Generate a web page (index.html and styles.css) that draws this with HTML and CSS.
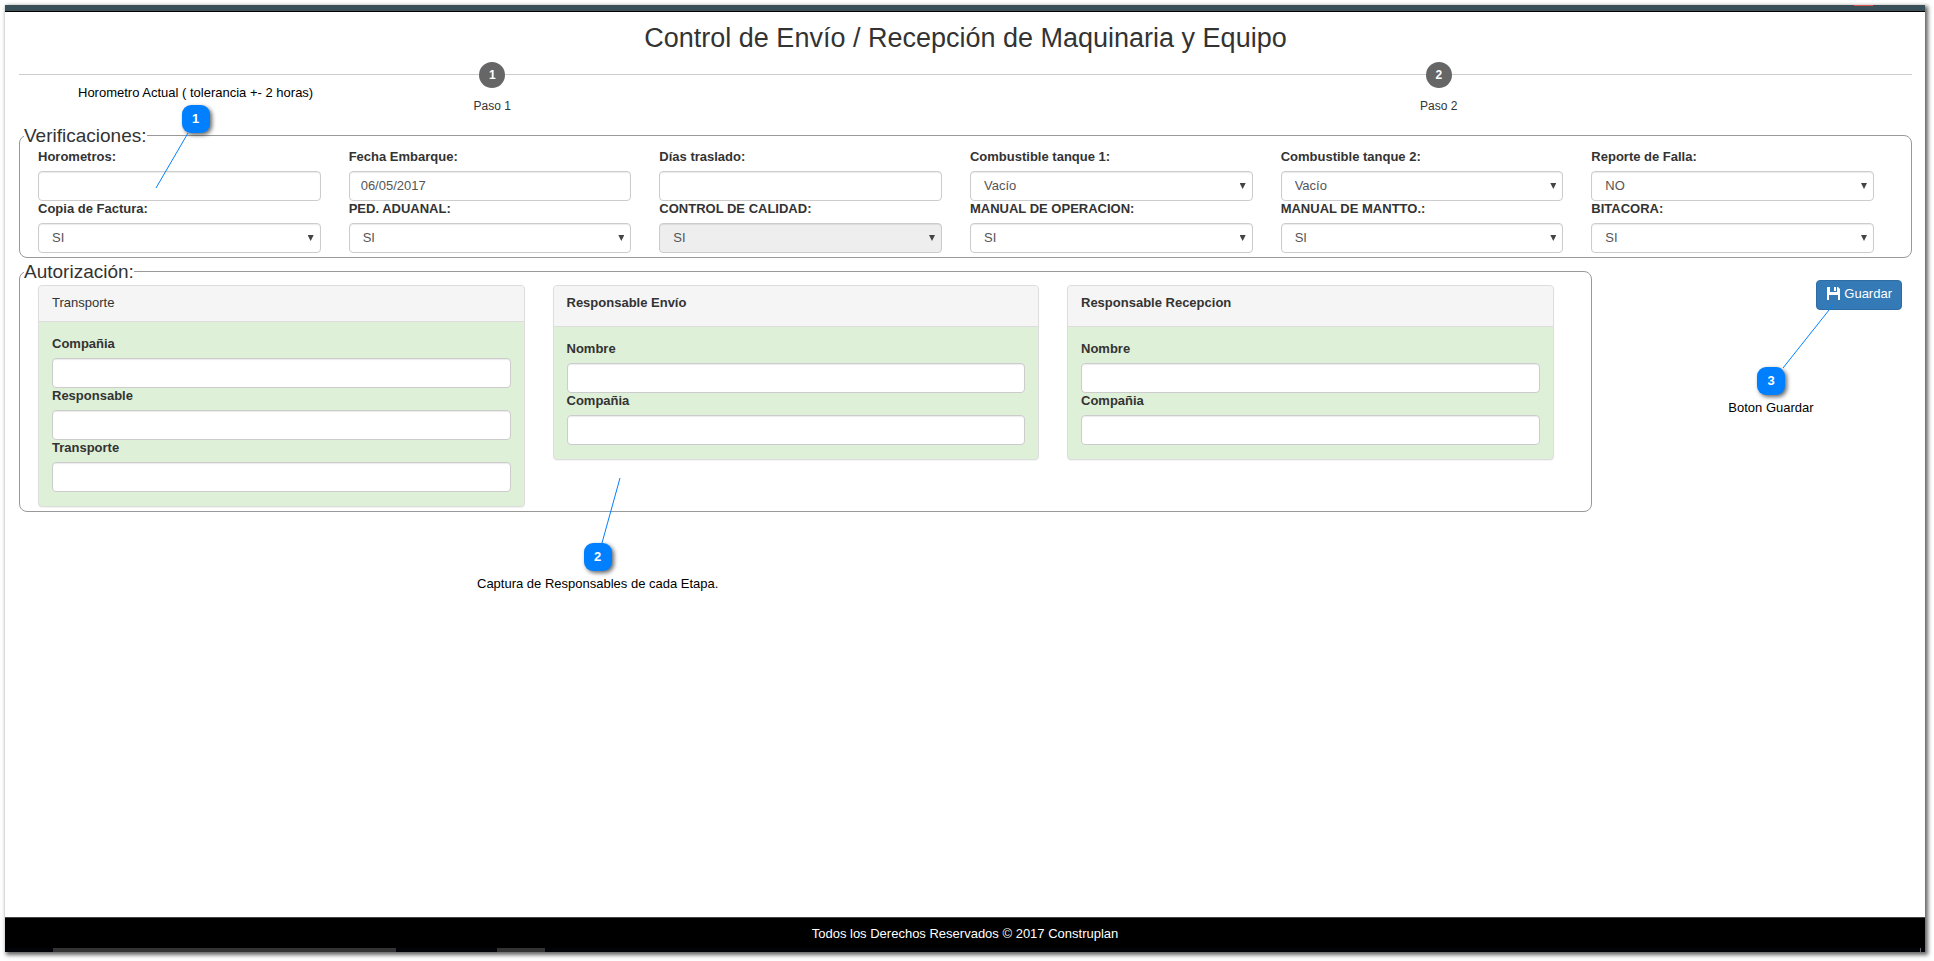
FILE: index.html
```html
<!DOCTYPE html>
<html lang="es">
<head>
<meta charset="utf-8">
<title>Control de Envío / Recepción de Maquinaria y Equipo</title>
<link rel="stylesheet" href="styles.css">
</head>
<body>
<div class="page">
  <header class="topbar"><span class="topbar-mark"></span></header>
  <main class="content">
    <h1 class="title">Control de Envío / Recepción de Maquinaria y Equipo</h1>
    <ol class="steps">
      <li class="step"><span class="step-dot">1</span><span class="step-name">Paso 1</span></li>
      <li class="step"><span class="step-dot">2</span><span class="step-name">Paso 2</span></li>
    </ol>

    <fieldset class="group">
      <legend class="group-title">Verificaciones:</legend>
      <div class="checks">
        <div class="field"><label class="label" for="horometros">Horometros:</label><input class="control" id="horometros" type="text"></div>
        <div class="field"><label class="label" for="fecha">Fecha Embarque:</label><input class="control" id="fecha" type="text" value="06/05/2017"></div>
        <div class="field"><label class="label" for="dias">Días traslado:</label><input class="control" id="dias" type="text"></div>
        <div class="field"><label class="label" for="tanque1">Combustible tanque 1:</label><div class="picker"><select class="control select" id="tanque1"><option>Vacío</option></select></div></div>
        <div class="field"><label class="label" for="tanque2">Combustible tanque 2:</label><div class="picker"><select class="control select" id="tanque2"><option>Vacío</option></select></div></div>
        <div class="field"><label class="label" for="falla">Reporte de Falla:</label><div class="picker"><select class="control select" id="falla"><option>NO</option><option>SI</option></select></div></div>
        <div class="field"><label class="label" for="factura">Copia de Factura:</label><div class="picker"><select class="control select" id="factura"><option>SI</option><option>NO</option></select></div></div>
        <div class="field"><label class="label" for="aduanal">PED. ADUANAL:</label><div class="picker"><select class="control select" id="aduanal"><option>SI</option><option>NO</option></select></div></div>
        <div class="field"><label class="label" for="calidad">CONTROL DE CALIDAD:</label><div class="picker"><select class="control select" id="calidad" disabled><option>SI</option></select></div></div>
        <div class="field"><label class="label" for="operacion">MANUAL DE OPERACION:</label><div class="picker"><select class="control select" id="operacion"><option>SI</option><option>NO</option></select></div></div>
        <div class="field"><label class="label" for="mantto">MANUAL DE MANTTO.:</label><div class="picker"><select class="control select" id="mantto"><option>SI</option><option>NO</option></select></div></div>
        <div class="field"><label class="label" for="bitacora">BITACORA:</label><div class="picker"><select class="control select" id="bitacora"><option>SI</option><option>NO</option></select></div></div>
      </div>
    </fieldset>

    <div class="lower">
      <fieldset class="group">
        <legend class="group-title">Autorización:</legend>
        <div class="panels">
          <section class="panel">
            <h2 class="panel-head">Transporte</h2>
            <div class="panel-body">
              <label class="label" for="t-compania">Compañia</label><input class="control" id="t-compania" type="text">
              <label class="label" for="t-responsable">Responsable</label><input class="control" id="t-responsable" type="text">
              <label class="label" for="t-transporte">Transporte</label><input class="control" id="t-transporte" type="text">
            </div>
          </section>
          <section class="panel">
            <h2 class="panel-head panel-head-strong">Responsable Envío</h2>
            <div class="panel-body">
              <label class="label" for="e-nombre">Nombre</label><input class="control" id="e-nombre" type="text">
              <label class="label" for="e-compania">Compañia</label><input class="control" id="e-compania" type="text">
            </div>
          </section>
          <section class="panel">
            <h2 class="panel-head panel-head-strong">Responsable Recepcion</h2>
            <div class="panel-body">
              <label class="label" for="r-nombre">Nombre</label><input class="control" id="r-nombre" type="text">
              <label class="label" for="r-compania">Compañia</label><input class="control" id="r-compania" type="text">
            </div>
          </section>
        </div>
      </fieldset>
      <div class="actions">
        <button class="save" type="button">
          <svg class="save-icon" viewBox="0 0 13 13" aria-hidden="true"><path fill="currentColor" fill-rule="evenodd" d="M0 0H3V5H10V0H11L13 2V13H11V8H2V13H0ZM7 0H9V4H7Z"/></svg>
          Guardar
        </button>
      </div>
    </div>
  </main>
  <footer class="footer">
    <p class="footer-text">Todos los Derechos Reservados © 2017 Construplan</p>
    <div class="strip"><span class="strip-wide"></span><span class="strip-small"></span><span class="strip-end"></span></div>
  </footer>

  <div class="callout callout-1">
    <p class="callout-text">Horometro Actual ( tolerancia +- 2 horas)</p>
    <span class="badge">1</span>
    <svg class="line" width="34" height="55" viewBox="0 0 34 55"><path d="M33 0L1 55"/></svg>
  </div>
  <div class="callout callout-2">
    <svg class="line" width="20" height="65" viewBox="0 0 20 65"><path d="M19 0L1 65"/></svg>
    <span class="badge">2</span>
    <p class="callout-text">Captura de Responsables de cada Etapa.</p>
  </div>
  <div class="callout callout-3">
    <svg class="line" width="51" height="63" viewBox="0 0 51 63"><path d="M50 0L0 63"/></svg>
    <span class="badge">3</span>
    <p class="callout-text">Boton Guardar</p>
  </div>
</div>
</body>
</html>
```

FILE: styles.css
```css
* { box-sizing: border-box; }

body {
  margin: 0;
  padding: 5px 9px 9px 5px;
  min-height: 100vh;
  display: flex;
  background: #fff;
  color: #333;
  font: 13px/17px "Liberation Sans", Arial, sans-serif;
}

.page {
  position: relative;
  flex: 1;
  display: flex;
  flex-direction: column;
  background: #fff;
  box-shadow: 2px 2px 4px 1px rgba(0, 0, 0, .6);
}

.topbar {
  display: flex;
  justify-content: flex-end;
  height: 7px;
  padding-right: 52px;
  background: #3a5058;
  border-bottom: 1px solid #000;
}
.topbar-mark { width: 19px; height: 1px; background: #d9534f; }

.content { flex: 1; padding: 10px 13px 20px 14px; }

.title {
  margin: 0 0 8px;
  text-align: center;
  font-size: 27px;
  line-height: 32px;
  font-weight: 400;
}

.steps {
  position: relative;
  display: flex;
  margin: 0 0 11px;
  padding: 0;
  list-style: none;
}
.steps::before {
  content: "";
  position: absolute;
  top: 12px;
  left: 0;
  right: 0;
  height: 1px;
  background: #ccc;
}
.step {
  position: relative;
  flex: 1;
  display: flex;
  flex-direction: column;
  align-items: center;
  gap: 10px;
}
.step-dot {
  width: 26px;
  height: 26px;
  border-radius: 50%;
  background: #666;
  color: #fff;
  font-size: 12px;
  line-height: 26px;
  font-weight: 700;
  text-align: center;
}
.step-name { font-size: 12px; line-height: 16px; }

.group {
  min-width: 0;
  margin: 0;
  padding: 3px 37px 4px 18px;
  border: 1px solid #999;
  border-radius: 8px;
}
.group-title {
  margin-left: -14px;
  padding: 0;
  font-size: 19px;
  line-height: 21px;
}

.checks {
  display: grid;
  grid-template-columns: repeat(6, 1fr);
  column-gap: 28px;
}
.label {
  display: block;
  padding-bottom: 6px;
  line-height: 16px;
  font-weight: 700;
}
.control {
  display: block;
  width: 100%;
  height: 30px;
  padding: 0 11px 1px;
  border: 1px solid #ccc;
  border-radius: 4px;
  background: #fff;
  box-shadow: inset 0 1px 1px rgba(0, 0, 0, .08);
  color: #555;
  font: inherit;
}
.select { padding: 0 13px 2px; appearance: none; opacity: 1; }
.select:disabled { background: #eee; }
.picker { position: relative; }
.picker::after {
  content: "";
  position: absolute;
  top: 12px;
  right: 7px;
  width: 6px;
  height: 6px;
  background: #444;
  clip-path: polygon(0 0, 100% 0, 50% 100%);
  pointer-events: none;
}

.lower {
  display: grid;
  grid-template-columns: 5fr 1fr;
  column-gap: 6px;
  margin-top: 3px;
}
.panels {
  display: grid;
  grid-template-columns: repeat(3, 1fr);
  align-items: start;
  gap: 28px;
}
.panel {
  border: 1px solid #ddd;
  border-radius: 4px;
  background: #dff0d8;
  box-shadow: 0 1px 1px rgba(0, 0, 0, .05);
}
.panel-head {
  margin: 0;
  padding: 8px 13px 10px;
  border-bottom: 1px solid #ddd;
  border-radius: 3px 3px 0 0;
  background: #f5f5f5;
  font-size: 13px;
  line-height: 17px;
  font-weight: 400;
}
.panel-head-strong { padding-bottom: 15px; font-weight: 700; }
.panel-body { padding: 14px 13px; }

.actions {
  display: flex;
  justify-content: flex-end;
  align-items: flex-start;
  padding: 19px 10px 0 0;
}
.save {
  display: flex;
  align-items: center;
  gap: 4px;
  height: 30px;
  padding: 0 9px 3px 10px;
  border: 1px solid #2e6da4;
  border-radius: 4px;
  background: #337ab7;
  color: #fff;
  font: inherit;
}
.save-icon { width: 13px; height: 13px; }

.footer {
  display: flex;
  flex-direction: column;
  justify-content: space-between;
  height: 35px;
  border-top: 1px solid #444;
  background: #000;
  color: #fff;
}
.footer-text { margin: 0; padding-top: 7px; text-align: center; }
.strip { display: flex; height: 4px; background: #010308; }
.strip-wide { width: 343px; margin-left: 48px; background: #333; }
.strip-small { width: 48px; margin-left: 101px; background: #333; }
.strip-end { width: 1px; margin: 0 4px 0 auto; background: #666; }

.callout {
  position: absolute;
  display: flex;
  flex-direction: column;
  align-items: center;
  color: #000;
  pointer-events: none;
}
.callout-text { margin: 0; white-space: nowrap; }
.badge {
  width: 28px;
  height: 28px;
  border-radius: 9px;
  background: #0080ff;
  box-shadow: 2px 2px 4px rgba(0, 0, 0, .6);
  color: #fff;
  line-height: 28px;
  font-weight: 700;
  text-align: center;
}
.line { fill: none; stroke: #0080ff; stroke-width: 1; }

.callout-1 { top: 79px; left: 73px; }
.callout-1 .badge { margin-top: 4px; }
.callout-1 .line { margin-right: 48px; }
.callout-2 { top: 473px; left: 472px; }
.callout-2 .line { margin-left: 26px; }
.callout-2 .badge { margin-bottom: 4px; }
.callout-3 { top: 300px; right: 91px; }
.callout-3 .line { margin-left: 75px; }
.callout-3 .badge { margin-top: -1px; margin-bottom: 4px; }
```
